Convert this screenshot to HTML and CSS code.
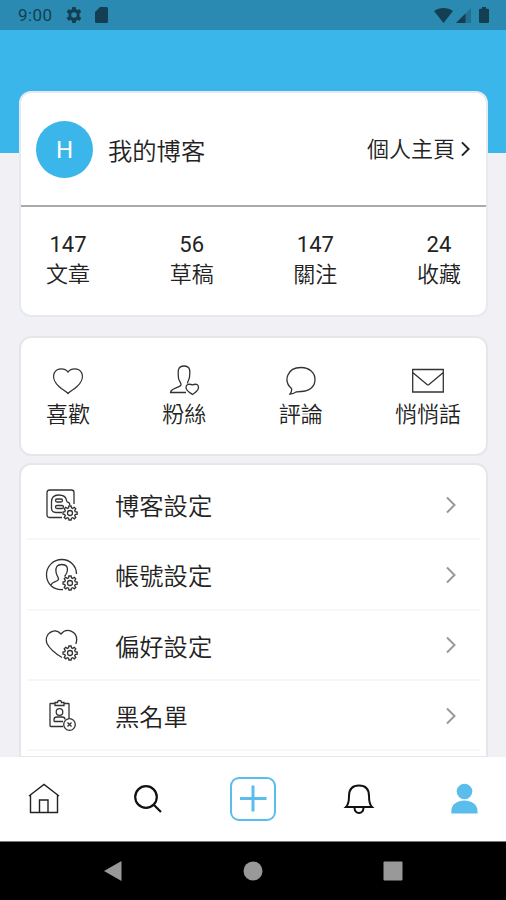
FILE: index.html
```html
<!DOCTYPE html>
<html lang="zh-Hant">
    <head>
        <meta charset="UTF-8" />
        <meta name="viewport" content="width=device-width, initial-scale=1.0" />
        <title>我的博客</title>
        <link rel="stylesheet" href="styles.css">
    </head>
    <body>
        <svg class="defs">
            <symbol id="gear" viewBox="0 0 16 16">
                <path d="M6.9 1h2.2l.4 1.9 1.2.5 1.6-1.1 1.5 1.5-1.1 1.6.5 1.2 2 .4v2.1l-2 .4-.5 1.2 1.1 1.6-1.5 1.5-1.6-1.1-1.2.5L9.1 15H6.9l-.4-1.8-1.2-.5-1.6 1.1-1.5-1.5 1.1-1.6-.5-1.2-1.8-.4V7l1.8-.4.5-1.2-1.1-1.6 1.5-1.5 1.6 1.1 1.2-.5z" />
                <circle cx="8" cy="8" r="2.5" />
            </symbol>
            <symbol id="arrow" viewBox="0 0 10 18">
                <path d="M1 1.500L8.500 9 1 16.500" />
            </symbol>
        </svg>

        <div class="status">
            <span class="time">9:00</span>
            <svg class="status-gear" width="16" height="16" viewBox="0 0 16 16">
                <path fill-rule="evenodd" d="M6.300 0h3.400l.4 2.300 1.300.7 2.200-.8 1.700 2.900-1.800 1.500v2.800l1.800 1.500-1.700 2.900-2.200-.8-1.300.7-.4 2.300H6.300l-.4-2.300-1.300-.7-2.200.8-1.700-2.900 1.800-1.500V6.600L.7 5.100l1.700-2.900 2.200.8 1.300-.7zM8 5.200a2.800 2.800 0 100 5.600 2.800 2.800 0 000-5.600z" />
            </svg>
            <svg class="status-card" width="13" height="16" viewBox="0 0 13 16">
                <path fill-rule="evenodd" d="M5 0h6.500A1.500 1.500 0 0113 1.500v13a1.500 1.500 0 01-1.500 1.500h-10A1.500 1.500 0 010 14.500V5z" />
            </svg>
            <svg class="status-wifi" width="19" height="15" viewBox="0 0 19 15">
                <path d="M0 3C5.500-1 13.500-1 19 3L9.500 15z" />
            </svg>
            <svg width="15" height="15" viewBox="0 0 15 15">
                <path opacity=".35" d="M15 0v15H0z" />
                <path d="M9.500 5.500V15H0z" />
            </svg>
            <svg class="status-battery" width="10" height="16" viewBox="0 0 10 16">
                <path d="M3 0h4v1.700h2q1 0 1 1V15q0 1-1 1H1q-1 0-1-1V2.700q0-1 1-1h2z" />
            </svg>
        </div>

        <main class="content">
            <section class="card profile">
                <div class="profile-head">
                    <div class="avatar">H</div>
                    <div class="profile-name">我的博客</div>
                    <a class="profile-link">個人主頁<svg width="9" height="16"><use href="#arrow" /></svg></a>
                </div>
                <div class="columns stats">
                    <div class="column"><span class="count">147</span><span>文章</span></div>
                    <div class="column"><span class="count">56</span><span>草稿</span></div>
                    <div class="column"><span class="count">147</span><span>關注</span></div>
                    <div class="column"><span class="count">24</span><span>收藏</span></div>
                </div>
            </section>

            <section class="card columns actions">
                <div class="column">
                    <svg class="icon" width="32" height="32" viewBox="0 0 32 32">
                        <path d="M16 7C13 3 5.500 2.500 2.500 7.500C.2 12.500 3 18 7 21.500C10 24.500 13.500 26 16 28.500C18.500 26 22 24.500 25 21.500C29 18 31.800 12.500 29.500 7.500C26.500 2.500 19 3 16 7z" />
                    </svg>
                    <span>喜歡</span>
                </div>
                <div class="column">
                    <svg class="icon" width="32" height="32" viewBox="0 0 32 32">
                        <path d="M18 27.500H2.500C3 22.500 12 23 13 20C13.300 17 11 17 10.500 13C9.800 6 9.500 1 16 1C22.500 1 22.200 6 21.500 12C21.300 15 19.500 16 19.500 18.500" />
                        <path d="M24.500 19.800C21.500 18.800 18 19 18 22.500C18 26 22 27.500 24.500 29.500C27 27.500 30.500 26 30.500 22.500C30.500 19 27.500 18.800 24.500 19.800z" />
                    </svg>
                    <span>粉絲</span>
                </div>
                <div class="column">
                    <svg class="icon" width="32" height="32" viewBox="0 0 32 32">
                        <path d="M6.500 23.500C-2 16 2 2.500 16 2.500C24.500 2.500 30 8 30 14.500C30 22 24 26.500 16 26.500C14 26.500 12.500 26.800 11 27C9 28.500 7.500 29 5 29C6.500 27 7 25.500 6.500 23.500z" />
                    </svg>
                    <span>評論</span>
                </div>
                <div class="column">
                    <svg class="icon" width="32" height="32" viewBox="0 0 32 32">
                        <path d="M.7 4.500h30.600v22.500H.7zM.7 7.500L15 19.500q1 .8 2 0L31.300 7.500" />
                    </svg>
                    <span>悄悄話</span>
                </div>
            </section>

            <section class="card menu">
                <div class="row">
                    <svg class="icon" width="34" height="34" viewBox="0 0 34 34">
                        <path d="M17 29.500H4.500q-2.500 0-2.500-2.500V4.500Q2 2 4.500 2h22Q29 2 29 4.500V16" />
                        <path d="M17 24.500H11q-4.500 0-4.500-4.500V14q0-7 7-7 7.500 0 8 5.500 .2 1.700 2 2 1.300.3 1.300 2.500" />
                        <rect x="10.500" y="11" width="7" height="3" rx="1.500" />
                        <rect x="10.500" y="17.500" width="8" height="3" rx="1.500" />
                        <use href="#gear" x="17" y="17" width="16" height="16" />
                    </svg>
                    <span class="label">博客設定</span>
                    <svg class="more" width="10" height="18"><use href="#arrow" /></svg>
                </div>
                <div class="row">
                    <svg class="icon" width="34" height="34" viewBox="0 0 34 34">
                        <path d="M18 31.500C9 32.500 1.500 26 1.500 16.800C1.500 8 8.500 1.500 16.800 1.500C25 1.500 31.500 8 31.500 16" />
                        <path d="M6 27C7 23.500 12.500 24 13.500 21.500C13.800 19 11.500 18 11 14C10.500 9 12 6.500 16.800 6.500C21.500 6.500 23 9 22.300 13C22 15.500 20.500 17 19.500 18.500" />
                        <use href="#gear" x="17" y="17" width="16" height="16" />
                    </svg>
                    <span class="label">帳號設定</span>
                    <svg class="more" width="10" height="18"><use href="#arrow" /></svg>
                </div>
                <div class="row">
                    <svg class="icon" width="34" height="34" viewBox="0 0 34 34">
                        <path d="M17 29.500C12 26.500 5 21.500 2 15.500C-1.500 6 9.500-1.500 16 6C22 -1.500 33 4 31.500 13.500L30.800 16" />
                        <use href="#gear" x="17" y="17" width="16" height="16" />
                    </svg>
                    <span class="label">偏好設定</span>
                    <svg class="more" width="10" height="18"><use href="#arrow" /></svg>
                </div>
                <div class="row">
                    <svg class="icon" width="34" height="34" viewBox="0 0 34 34">
                        <path d="M10 4.500H5.500Q5 4.500 5 5V26.500q0 1 1 1H18M19 4.500h4.500q.5 0 .5.500V19" />
                        <path d="M10 6.500V3.500h2.500q0-2 2-2t2 2H19v3z" />
                        <circle cx="14.500" cy="13" r="3.300" />
                        <path d="M9 22.500v-2q0-2.500 3-2.500h5q3 0 3 2.500M9 22.500h9" />
                        <circle cx="24.500" cy="25.500" r="5.800" />
                        <path d="M22.500 23.500l4 4m0-4l-4 4" />
                    </svg>
                    <span class="label">黑名單</span>
                    <svg class="more" width="10" height="18"><use href="#arrow" /></svg>
                </div>
            </section>
        </main>

        <nav class="tabs">
            <svg class="tab home" width="32" height="32" viewBox="0 0 32 32">
                <path d="M1 13L16 1.500 31 13M2.500 12V29.500H29.500V12M11.500 29.500V17h8.500v12.500" />
            </svg>
            <svg class="tab search" width="32" height="32" viewBox="0 0 32 32">
                <circle cx="14" cy="14" r="10.800" />
                <path d="M21.700 21.700L29 29" />
            </svg>
            <svg class="tab add" width="46" height="44" viewBox="0 0 46 44">
                <rect x="1" y="1" width="44" height="42" rx="8" />
                <path d="M23 8.500v26M10 21.500h26.500" />
            </svg>
            <svg class="tab bell" width="32" height="32" viewBox="0 0 32 32">
                <path d="M3 24h26c-2.600-2.500-3-5.500-3-11C26 6 22 2.500 16 2.500S6 6 6 13C6 18.500 5.600 21.500 3 24z" />
                <path d="M11.500 25c.5 6.500 8.500 6.500 9 0" />
            </svg>
            <svg class="tab me" width="32" height="32" viewBox="0 0 32 32">
                <circle cx="16.500" cy="8.500" r="7.800" />
                <path d="M3.300 30.500V28C3.300 14 29.500 14 29.500 28v2.500z" />
            </svg>
        </nav>

        <div class="system">
            <svg width="20" height="22" viewBox="0 0 20 22">
                <path d="M18.500 1v20L1 11z" />
            </svg>
            <svg width="20" height="20" viewBox="0 0 20 20">
                <circle cx="10" cy="10" r="9.500" />
            </svg>
            <svg width="20" height="20" viewBox="0 0 20 20">
                <rect x=".5" y=".5" width="19" height="19" rx="1" />
            </svg>
        </div>
    </body>
</html>
```
FILE: styles.css
```css
* {
    box-sizing: border-box;
}
body {
    display: flex;
    flex-direction: column;
    width: 506px;
    height: 900px;
    margin: 0;
    overflow: hidden;
    background-color: #f0f0f5;
    color: #222;
    font-family: Roboto, "Noto Sans CJK TC", sans-serif;
    font-size: 22px;
    font-weight: 350;
}
svg {
    display: block;
    flex: none;
}
.defs {
    position: absolute;
    width: 0;
    height: 0;
}
.status {
    display: flex;
    align-items: center;
    flex: none;
    height: 30px;
    padding: 0 17px 0 18px;
    background-color: #2b8ab2;
    color: #143f52;
    fill: #143f52;
}
.time {
    width: 48px;
    font-size: 17px;
    font-weight: 400;
    letter-spacing: 0.4px;
    line-height: 32px;
}
.status-card {
    margin-left: 13px;
}
.status-wifi {
    margin-left: auto;
    margin-right: 3px;
}
.status-battery {
    margin-left: 8px;
}
.content {
    flex: 1;
    min-height: 0;
    padding: 61px 18px 0 19px;
    overflow: hidden;
    background: linear-gradient(#3ab6ea 123px, #f0f0f5 123px);
}
.card {
    border: 2px solid #e6e6ea;
    border-radius: 12px;
    background-color: white;
}
.profile {
    height: 226px;
    margin-bottom: 19px;
    border-color: #e4eaef;
}
.profile-head {
    display: flex;
    align-items: center;
    height: 114px;
    padding: 0 16px 0 15px;
    border-bottom: 2px solid #aaa;
}
.avatar {
    width: 57px;
    height: 57px;
    border-radius: 50%;
    background-color: #3ab6ea;
    color: white;
    font-size: 24px;
    font-weight: 400;
    line-height: 58px;
    text-align: center;
}
.profile-name {
    margin-left: 15px;
    font-size: 24.3px;
}
.profile-link {
    display: flex;
    align-items: center;
    gap: 6px;
    margin-left: auto;
    padding-bottom: 4px;
}
.profile-link svg {
    margin-top: 4px;
    fill: none;
    stroke: #222;
    stroke-width: 2.2;
}
.columns {
    display: flex;
    justify-content: space-between;
    padding: 0 25px;
}
.column {
    display: flex;
    flex-direction: column;
    align-items: center;
    line-height: 30px;
}
.count {
    font-weight: 400;
}
.stats {
    padding-top: 23px;
}
.actions {
    height: 120px;
    margin-bottom: 7px;
    padding-top: 27px;
}
.actions .column span {
    margin-top: 3px;
}
.icon {
    fill: none;
    stroke: #333;
    stroke-width: 1.3;
}
.menu {
    padding: 5px 6px;
    border-bottom-left-radius: 0;
    border-bottom-right-radius: 0;
}
.row {
    display: flex;
    align-items: center;
    height: 70.3px;
    padding: 1px 24px 0 18px;
    border-bottom: 2px solid #f7f7f9;
}
.label {
    margin-left: 36px;
    font-size: 24.3px;
}
.more {
    margin-left: auto;
    fill: none;
    stroke: #999;
    stroke-width: 2;
}
.tabs {
    display: flex;
    align-items: center;
    justify-content: space-between;
    flex: none;
    height: 84px;
    padding: 0 26px 0 28px;
    background-color: white;
}
.tab {
    fill: none;
    stroke: #222;
}
.home {
    stroke-width: 1.4;
}
.search {
    margin-left: 5px;
    stroke: #111;
    stroke-width: 2.2;
}
.add {
    stroke: #5bbdec;
    stroke-width: 2;
}
.add path {
    stroke-width: 3;
}
.bell {
    margin-right: 7px;
    stroke: #111;
    stroke-width: 2;
}
.me {
    fill: #5bbdec;
    stroke: none;
}
.system {
    display: flex;
    align-items: center;
    justify-content: space-between;
    flex: none;
    height: 59px;
    padding: 0 103px;
    border-top: 1px solid #777;
    background-color: black;
    fill: #999;
}
```
